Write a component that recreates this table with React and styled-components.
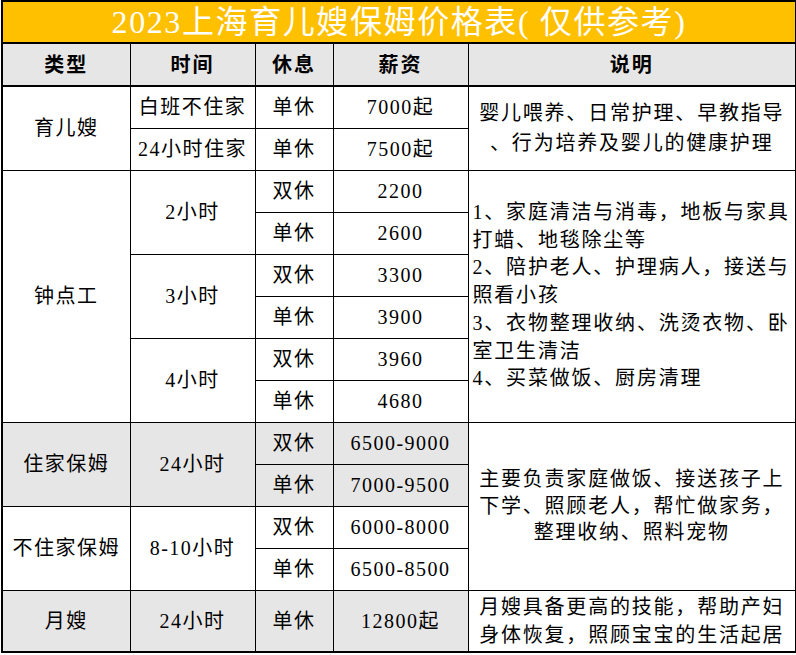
import React from "react";
import styled, { createGlobalStyle } from "styled-components";

const GlobalStyle = createGlobalStyle`
  html, body {
    margin: 0;
    padding: 0;
    background: #fff;
  }
  body {
    font-family: "Liberation Serif", "Noto Sans CJK SC", serif;
    color: #000;
  }
`;

const Sheet = styled.table`
  border-collapse: collapse;
  table-layout: fixed;
  width: 794px;
  margin: 0 0 0 1px;
  border: 2px solid #000;
`;

const Row = styled.tr`
  height: ${(p) => p.$h || 42}px;
`;

const TitleCell = styled.td`
  background: #ffc000;
  color: #fff;
  font-size: 32px;
  line-height: 36px;
  letter-spacing: 1.6px;
  text-align: center;
  padding: 0;
  border-bottom: 2px solid #000;
  white-space: nowrap;
`;

const HeadCell = styled.th`
  background: #e7e6e6;
  font-size: 20px;
  line-height: 28px;
  font-weight: 700;
  letter-spacing: 2px;
  text-align: center;
  padding: 0;
  border: 1px solid #000;
  border-bottom-width: 2px;
`;

const Cell = styled.td`
  background: ${(p) => (p.$gray ? "#e7e6e6" : "#fff")};
  font-size: 20px;
  line-height: 28px;
  letter-spacing: 1.5px;
  text-align: center;
  vertical-align: middle;
  padding: 0;
  border: 1px solid #000;
  white-space: nowrap;
`;

const Desc = styled.td`
  background: #fff;
  font-size: 20px;
  letter-spacing: 1.8px;
  line-height: ${(p) => p.$lh}px;
  text-align: ${(p) => p.$align || "center"};
  vertical-align: middle;
  padding: 0 0 0 ${(p) => (p.$align === "left" ? 4 : 0)}px;
  border: 1px solid #000;
  white-space: nowrap;
`;

const Line = styled.div``;

const lines = (arr) => arr.map((t) => <Line key={t}>{t}</Line>);

export default function App() {
  return (
    <>
      <GlobalStyle />
      <Sheet>
        <colgroup>
          <col style={{ width: 128 }} />
          <col style={{ width: 125 }} />
          <col style={{ width: 78 }} />
          <col style={{ width: 135 }} />
          <col style={{ width: 328 }} />
        </colgroup>
        <tbody>
          <Row $h={42}>
            <TitleCell colSpan={5}>2023上海育儿嫂保姆价格表( 仅供参考)</TitleCell>
          </Row>
          <Row $h={43}>
            <HeadCell>类型</HeadCell>
            <HeadCell>时间</HeadCell>
            <HeadCell>休息</HeadCell>
            <HeadCell>薪资</HeadCell>
            <HeadCell>说明</HeadCell>
          </Row>

          <Row>
            <Cell rowSpan={2}>育儿嫂</Cell>
            <Cell>白班不住家</Cell>
            <Cell>单休</Cell>
            <Cell>7000起</Cell>
            <Desc rowSpan={2} $lh={30}>
              {lines(["婴儿喂养、日常护理、早教指导", "、行为培养及婴儿的健康护理"])}
            </Desc>
          </Row>
          <Row>
            <Cell>24小时住家</Cell>
            <Cell>单休</Cell>
            <Cell>7500起</Cell>
          </Row>

          <Row>
            <Cell rowSpan={6}>钟点工</Cell>
            <Cell rowSpan={2}>2小时</Cell>
            <Cell>双休</Cell>
            <Cell>2200</Cell>
            <Desc rowSpan={6} $lh={27.7} $align="left">
              {lines([
                "1、家庭清洁与消毒，地板与家具",
                "打蜡、地毯除尘等",
                "2、陪护老人、护理病人，接送与",
                "照看小孩",
                "3、衣物整理收纳、洗烫衣物、卧",
                "室卫生清洁",
                "4、买菜做饭、厨房清理",
              ])}
            </Desc>
          </Row>
          <Row>
            <Cell>单休</Cell>
            <Cell>2600</Cell>
          </Row>
          <Row>
            <Cell rowSpan={2}>3小时</Cell>
            <Cell>双休</Cell>
            <Cell>3300</Cell>
          </Row>
          <Row>
            <Cell>单休</Cell>
            <Cell>3900</Cell>
          </Row>
          <Row>
            <Cell rowSpan={2}>4小时</Cell>
            <Cell>双休</Cell>
            <Cell>3960</Cell>
          </Row>
          <Row>
            <Cell>单休</Cell>
            <Cell>4680</Cell>
          </Row>

          <Row>
            <Cell rowSpan={2} $gray>住家保姆</Cell>
            <Cell rowSpan={2} $gray>24小时</Cell>
            <Cell $gray>双休</Cell>
            <Cell $gray>6500-9000</Cell>
            <Desc rowSpan={4} $lh={26.5}>
              {lines([
                "主要负责家庭做饭、接送孩子上",
                "下学、照顾老人，帮忙做家务，",
                "整理收纳、照料宠物",
              ])}
            </Desc>
          </Row>
          <Row>
            <Cell $gray>单休</Cell>
            <Cell $gray>7000-9500</Cell>
          </Row>
          <Row>
            <Cell rowSpan={2}>不住家保姆</Cell>
            <Cell rowSpan={2}>8-10小时</Cell>
            <Cell>双休</Cell>
            <Cell>6000-8000</Cell>
          </Row>
          <Row>
            <Cell>单休</Cell>
            <Cell>6500-8500</Cell>
          </Row>

          <Row $h={62}>
            <Cell $gray>月嫂</Cell>
            <Cell $gray>24小时</Cell>
            <Cell $gray>单休</Cell>
            <Cell $gray>12800起</Cell>
            <Desc $lh={28}>
              {lines(["月嫂具备更高的技能，帮助产妇", "身体恢复，照顾宝宝的生活起居"])}
            </Desc>
          </Row>
        </tbody>
      </Sheet>
    </>
  );
}
